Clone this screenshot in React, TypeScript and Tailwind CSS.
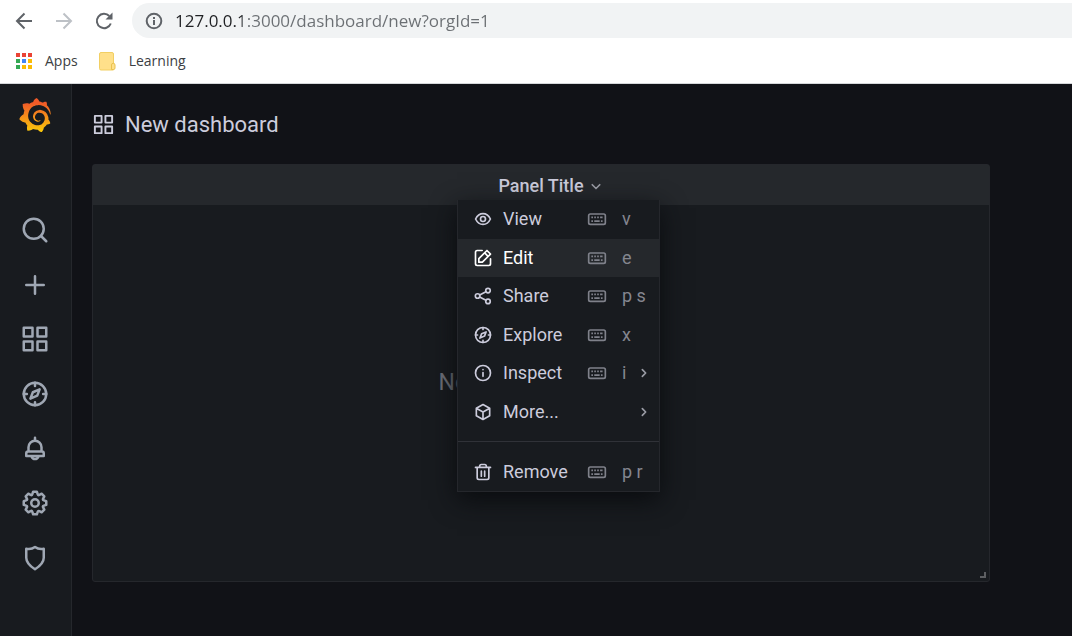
import type { ReactNode } from "react";
import { SiGrafana } from "react-icons/si";

const APPS =
  "M10,13H3a1,1,0,0,0-1,1v7a1,1,0,0,0,1,1h7a1,1,0,0,0,1-1V14A1,1,0,0,0,10,13ZM9,20H4V15H9ZM21,2H14a1,1,0,0,0-1,1v7a1,1,0,0,0,1,1h7a1,1,0,0,0,1-1V3A1,1,0,0,0,21,2ZM20,9H15V4h5Zm1,4H14a1,1,0,0,0-1,1v7a1,1,0,0,0,1,1h7a1,1,0,0,0,1-1V14A1,1,0,0,0,21,13Zm-1,7H15V15h5ZM10,2H3A1,1,0,0,0,2,3v7a1,1,0,0,0,1,1h7a1,1,0,0,0,1-1V3A1,1,0,0,0,10,2ZM9,9H4V4H9Z";
const COG =
  "M21.32,9.55l-1.89-.63.89-1.78A1,1,0,0,0,20.13,6L18,3.87a1,1,0,0,0-1.15-.19l-1.78.89-.63-1.89A1,1,0,0,0,13.5,2h-3a1,1,0,0,0-.95.68L8.92,4.57,7.14,3.68A1,1,0,0,0,6,3.87L3.87,6a1,1,0,0,0-.19,1.15l.89,1.78-1.89.63A1,1,0,0,0,2,10.5v3a1,1,0,0,0,.68.95l1.89.63-.89,1.78A1,1,0,0,0,3.87,18L6,20.13a1,1,0,0,0,1.15.19l1.78-.89.63,1.89a1,1,0,0,0,.95.68h3a1,1,0,0,0,.95-.68l.63-1.89,1.78.89A1,1,0,0,0,18,20.13L20.13,18a1,1,0,0,0,.19-1.15l-.89-1.78,1.89-.63A1,1,0,0,0,22,13.5v-3A1,1,0,0,0,21.32,9.55ZM20,12.78l-1.2.4A2,2,0,0,0,17.64,16l.57,1.14-1.1,1.1L16,17.64a2,2,0,0,0-2.79,1.16l-.4,1.2H11.22l-.4-1.2A2,2,0,0,0,8,17.64l-1.14.57-1.1-1.1L6.36,16A2,2,0,0,0,5.2,13.18L4,12.78V11.22l1.2-.4A2,2,0,0,0,6.36,8L5.79,6.89l1.1-1.1L8,6.36A2,2,0,0,0,10.82,5.2l.4-1.2h1.56l.4,1.2A2,2,0,0,0,16,6.36l1.14-.57,1.1,1.1L17.64,8a2,2,0,0,0,1.16,2.79l1.2.4ZM12,8a4,4,0,1,0,4,4A4,4,0,0,0,12,8Zm0,6a2,2,0,1,1,2-2A2,2,0,0,1,12,14Z";
const EDIT =
  "M21,12a1,1,0,0,0-1,1v6a1,1,0,0,1-1,1H5a1,1,0,0,1-1-1V5A1,1,0,0,1,5,4h6a1,1,0,0,0,0-2H5A3,3,0,0,0,2,5V19a3,3,0,0,0,3,3H19a3,3,0,0,0,3-3V13A1,1,0,0,0,21,12ZM6,12.76V17a1,1,0,0,0,1,1h4.24a1,1,0,0,0,.71-.29l6.92-6.93h0L21.71,8a1,1,0,0,0,0-1.42L17.47,2.29a1,1,0,0,0-1.42,0L13.23,5.12h0L6.29,12.05A1,1,0,0,0,6,12.76ZM16.76,4.41l2.83,2.83L18.17,8.66,15.34,5.83ZM8,13.17l5.93-5.93,2.83,2.83L10.83,16H8Z";

type IconName =
  | "search" | "plus" | "apps" | "compass" | "bell" | "cog" | "shield" | "eye" | "edit"
  | "share" | "info" | "cube" | "trash" | "keyboard" | "right" | "down";

const shapes: Record<IconName, ReactNode> = {
  search: <><circle cx="11" cy="11" r="8" /><path d="m16.8 16.8 4.2 4.2" /></>,
  plus: <path d="M12 5v14M5 12h14" />,
  apps: <path d={APPS} fill="currentColor" stroke="none" />,
  compass: (
    <>
      <circle cx="12" cy="12" r="9" />
      <path d="M12 3v2.5M12 18.5V21M3 12h2.5M18.5 12H21" />
      <path d="m15.7 8.3-1.9 5-5.5 2.4 2-5.1z" />
    </>
  ),
  bell: (
    <path d="M12 3v2M6.800 13.800V10.500a5.200 5.200 0 0 1 10.400 0v3.300M6.500 14h11a1.500 1.500 0 0 1 1.500 1.500V17.500H5v-2a1.500 1.500 0 0 1 1.500-1.500zM9.300 18.200a2.900 2.900 0 0 0 5.400 0" />
  ),
  cog: <path d={COG} fill="currentColor" stroke="none" />,
  shield: <path d="M12 3.200c2 1.500 4.500 2 7 1.400v7.200c0 3.900-3.500 7-7 9.200-3.500-2.200-7-5.300-7-9.200V4.600c2.500.6 5 .1 7-1.400z" />,
  eye: (
    <>
      <path d="M3.100 12C5 8 8.200 5.500 12 5.500S19 8 20.900 12C19 16 15.800 18.500 12 18.500S5 16 3.100 12z" />
      <circle cx="12" cy="12" r="3" />
    </>
  ),
  edit: <path d={EDIT} fill="currentColor" stroke="none" />,
  share: (
    <>
      <circle cx="18" cy="5.500" r="2.700" />
      <circle cx="5.500" cy="12" r="2.700" />
      <circle cx="18" cy="18.500" r="2.700" />
      <path d="m8 10.700 7.500-3.900M8 13.300l7.500 3.900" />
    </>
  ),
  info: <><circle cx="12" cy="12" r="9" /><path d="M12 11.500V16M12 8v.1" /></>,
  cube: <path d="m12 3 8 4.500v9L12 21l-8-4.500v-9zM4.500 7.800 12 12l7.500-4.200M12 12v8.500" />,
  trash: <path d="M3 6.500h18M8 6V5a2 2 0 0 1 2-2h4a2 2 0 0 1 2 2v1M5 7v12a2 2 0 0 0 2 2h10a2 2 0 0 0 2-2V7M10 11v6M14 11v6" />,
  keyboard: (
    <>
      <rect x="2" y="6" width="20" height="12.500" rx="2" />
      <path strokeLinecap="butt" d="M5.200 10h2M8.700 10h2M12.200 10h2M15.700 10h3M5.200 14.500h2M8.700 14.500h6.500M16.700 14.500h2" />
    </>
  ),
  right: <path d="m10 8 4 4-4 4" />,
  down: <path d="m7.500 10.500 4.500 4.500 4.500-4.500" />,
};

function Icon({ name, className }: { name: IconName; className: string }) {
  return (
    <svg
      viewBox="0 0 24 24"
      fill="none"
      stroke="currentColor"
      strokeWidth="2"
      strokeLinecap="round"
      strokeLinejoin="round"
      aria-hidden="true"
      className={`shrink-0 ${className}`}
    >
      {shapes[name]}
    </svg>
  );
}

const appDots = ["#ea4335", "#ea4335", "#ea4335", "#34a853", "#4285f4", "#fbbc04", "#34a853", "#fbbc04", "#fbbc04"];

function BrowserBar() {
  return (
    <header className="border-b border-[#d5d7da] bg-white font-['Open_Sans','Noto_Sans',sans-serif] text-[#3c4043]">
      <div className="flex h-[41px] items-center pl-3">
        <button aria-label="Back" className="grid h-6 w-6 place-items-center text-[#5f6368]">
          <svg viewBox="0 0 20 20" className="h-5 w-5" fill="none" stroke="currentColor" strokeWidth="2">
            <path d="M18 10H3M10.500 2.500 3 10l7.500 7.500" />
          </svg>
        </button>
        <button aria-label="Forward" className="ml-4 grid h-6 w-6 place-items-center text-[#bdc1c6]">
          <svg viewBox="0 0 20 20" className="h-5 w-5" fill="none" stroke="currentColor" strokeWidth="2">
            <path d="M2 10h15M9.500 2.500 17 10l-7.500 7.500" />
          </svg>
        </button>
        <button aria-label="Reload" className="ml-4 grid h-6 w-6 place-items-center text-[#5f6368]">
          <svg viewBox="0 0 20 20" className="h-5 w-5" fill="none" stroke="currentColor" strokeWidth="2">
            <path d="M16.800 12.500A7.200 7.200 0 1 1 15.300 5" />
            <path d="M18.500 1.500v7h-7z" fill="currentColor" stroke="none" />
          </svg>
        </button>
        <div className="ml-4 flex h-[35px] flex-1 items-center rounded-l-full bg-[#f1f3f4] pl-3">
          <svg viewBox="0 0 20 20" className="h-5 w-5 shrink-0 text-[#5f6368]" fill="none" stroke="currentColor" strokeWidth="2">
            <circle cx="10" cy="10" r="7.300" />
            <path d="M10 9v5M10 6v2" />
          </svg>
          <input
            aria-label="Address"
            defaultValue="127.0.0.1:3000/dashboard/new?orgId=1"
            className="ml-[11px] h-7 min-w-0 flex-1 bg-[linear-gradient(90deg,#202124_67px,#6b6f73_67px)] bg-clip-text text-[17px] text-transparent outline-none"
          />
        </div>
      </div>
      <nav aria-label="Bookmarks" className="flex h-[42px] items-center pb-0.5 pl-4 text-sm">
        <a href="#apps" className="flex items-center gap-[11px]">
          <svg viewBox="0 0 18 18" className="h-[18px] w-[18px]">
            {appDots.map((color, i) => (
              <rect key={i} x={(i % 3) * 6} y={Math.floor(i / 3) * 6 + 1} width="4" height="4" fill={color} />
            ))}
          </svg>
          Apps
        </a>
        <a href="#learning" className="ml-5 flex items-center gap-[11px]">
          <svg viewBox="0 0 20 20" className="h-5 w-5">
            <path d="M3 1.500h11a1.500 1.500 0 0 1 1.500 1.500v16H3a1.500 1.500 0 0 1-1.500-1.500V3A1.500 1.500 0 0 1 3 1.500z" fill="#ffe08a" stroke="#f2cf63" />
            <path d="M13.500 18.500v-4.500a1.500 1.500 0 0 1 3.500 0v3a1.500 1.500 0 0 1-1.500 1.500z" fill="#ffe08a" stroke="#e9c251" />
          </svg>
          Learning
        </a>
      </nav>
    </header>
  );
}

const navItems: { icon: IconName; label: string }[] = [
  { icon: "search", label: "Search" },
  { icon: "plus", label: "Create" },
  { icon: "apps", label: "Dashboards" },
  { icon: "compass", label: "Explore" },
  { icon: "bell", label: "Alerting" },
  { icon: "cog", label: "Configuration" },
  { icon: "shield", label: "Server admin" },
];

function Sidebar() {
  return (
    <nav aria-label="Main" className="w-[72px] shrink-0 border-r border-[#25272c] bg-[#181b1f] pt-[11px]">
      <a href="#home" aria-label="Home" className="flex h-10 items-center justify-center pr-0.5">
        <svg className="absolute h-0 w-0" aria-hidden="true">
          <linearGradient id="brand" x1="0" y1="0" x2="0" y2="1">
            <stop offset="0.15" stopColor="#f05a28" />
            <stop offset="1" stopColor="#fbca0a" />
          </linearGradient>
        </svg>
        <SiGrafana fill="url(#brand)" className="h-[34px] w-[34px]" />
      </a>
      <ul className="mt-[68px] grid h-[382px] grid-rows-7">
        {navItems.map((item) => (
          <li key={item.label} className="grid">
            <a href="#nav" aria-label={item.label} className="grid place-items-center pr-px text-[#9fa7b3]">
              <Icon name={item.icon} className="h-[30px] w-[30px]" />
            </a>
          </li>
        ))}
      </ul>
    </nav>
  );
}

interface Action {
  icon: IconName;
  label: string;
  keys?: string;
  submenu?: boolean;
  active?: boolean;
}

const actions: Action[] = [
  { icon: "eye", label: "View", keys: "v" },
  { icon: "edit", label: "Edit", keys: "e", active: true },
  { icon: "share", label: "Share", keys: "p s" },
  { icon: "compass", label: "Explore", keys: "x" },
  { icon: "info", label: "Inspect", keys: "i", submenu: true },
  { icon: "cube", label: "More...", submenu: true },
];

function MenuRow({ icon, label, keys, submenu, active }: Action) {
  return (
    <button
      role="menuitem"
      className={`flex w-full items-center pl-[15px] pr-[5px] text-left ${active ? "bg-[#25282c] text-white" : "text-[#ccccdc]"}`}
    >
      <Icon name={icon} className="h-5 w-5" />
      <span className="ml-2.5 w-[84px]">{label}</span>
      {keys && (
        <>
          <Icon name="keyboard" className="h-5 w-5 text-[#7f818a]" />
          <span className="ml-[15px] text-[#84868f]">{keys}</span>
        </>
      )}
      {submenu && <Icon name="right" className="ml-auto h-5 w-5 text-[#9a9ca5]" />}
    </button>
  );
}

function PanelMenu() {
  return (
    <div
      role="menu"
      className="absolute left-1/2 top-[35px] z-10 -ml-[84px] w-[203px] border border-t-0 border-[#25272c] bg-[#181b1f] text-lg shadow-[0_8px_24px_#0a0c0f]"
    >
      <div className="grid h-[231px] grid-rows-6">
        {actions.map((action) => (
          <MenuRow key={action.label} {...action} />
        ))}
      </div>
      <hr className="mb-[11px] mt-2.5 border-[#303238]" />
      <div className="grid h-[38px]">
        <MenuRow icon="trash" label="Remove" keys="p r" />
      </div>
    </div>
  );
}

export default function App() {
  return (
    <div className="flex min-h-screen flex-col bg-[#111217] font-[Roboto,sans-serif]">
      <BrowserBar />
      <div className="flex flex-1">
        <Sidebar />
        <main className="min-w-0 flex-1 pl-5 pr-[82px]">
          <h1 className="flex h-20 items-center gap-2.5 text-[22px] text-[#ccccdc]">
            <Icon name="apps" className="h-[23px] w-[23px]" />
            New dashboard
          </h1>
          <section className="relative flex h-[418px] flex-col rounded-[3px] border border-[#25272c] bg-[#181b1f]">
            <button className="flex h-10 items-center justify-center gap-0.5 bg-[#25282c] pt-0.5 text-lg font-medium text-[#ccccdc]">
              <span className="pl-[22px]">Panel Title</span>
              <Icon name="down" className="h-5 w-5 text-[#9a9ca5]" />
            </button>
            <PanelMenu />
            <p className="flex flex-1 items-center justify-center pb-5 text-[23px] text-[#6f727b]">No data in response</p>
            <span className="absolute bottom-[3px] right-[3px] h-1.5 w-1.5 border-b-2 border-r-2 border-[#5d5f62]" />
          </section>
        </main>
      </div>
    </div>
  );
}
